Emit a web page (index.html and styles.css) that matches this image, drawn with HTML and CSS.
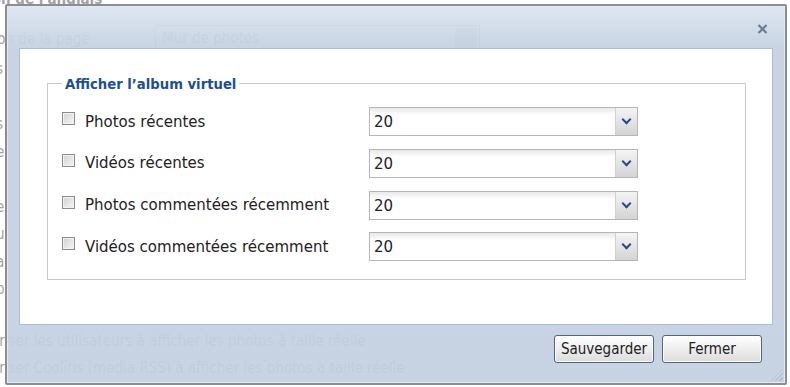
FILE: index.html
```html
<!DOCTYPE html>
<html lang="fr">
<head>
    <meta charset="UTF-8">
    <meta name="viewport" content="width=device-width, initial-scale=1.0">
    <title>Album virtuel</title>
    <link rel="stylesheet" href="styles.css">
</head>
<body>
    <div class="page">
        <p class="page-line page-head">Traduction de l'anglais</p>
        <div class="page-row">
            <span class="page-label">Orientation de la page</span>
            <span class="page-select">Mur de photos<span class="page-arrow"></span></span>
        </div>
        <div class="page-side">
            <p class="page-line">s</p>
            <p class="page-line">l</p>
            <p class="page-line">s</p>
            <p class="page-line">e</p>
            <p class="page-line">i</p>
            <p class="page-line">e</p>
            <p class="page-line">u</p>
            <p class="page-line">a</p>
            <p class="page-line">p</p>
        </div>
        <p class="page-line page-option">Autoriser les utilisateurs à afficher les photos à taille réelle</p>
        <p class="page-line page-option">Autoriser Cooliris (media RSS) à afficher les photos à taille réelle</p>
    </div>

    <div class="dialog">
        <div class="dialog-title">
            <span class="dialog-close">
                <svg width="11" height="10" viewBox="0 0 11 10">
                    <path d="M1.5 1 L9.5 9 M9.5 1 L1.5 9" stroke="#6b7b92" stroke-width="2.2" fill="none"/>
                </svg>
            </span>
        </div>

        <div class="dialog-body">
            <fieldset class="album">
                <legend class="album-legend">Afficher l’album virtuel</legend>

                <div class="album-row">
                    <label class="album-check"><span class="checkbox"></span>Photos récentes</label>
                    <div class="select"><span class="select-value">20</span><span class="select-arrow"></span></div>
                </div>
                <div class="album-row">
                    <label class="album-check"><span class="checkbox"></span>Vidéos récentes</label>
                    <div class="select"><span class="select-value">20</span><span class="select-arrow"></span></div>
                </div>
                <div class="album-row">
                    <label class="album-check"><span class="checkbox"></span>Photos commentées récemment</label>
                    <div class="select"><span class="select-value">20</span><span class="select-arrow"></span></div>
                </div>
                <div class="album-row">
                    <label class="album-check"><span class="checkbox"></span>Vidéos commentées récemment</label>
                    <div class="select"><span class="select-value">20</span><span class="select-arrow"></span></div>
                </div>
            </fieldset>
        </div>

        <div class="dialog-buttons">
            <button class="dialog-button">Sauvegarder</button>
            <button class="dialog-button">Fermer</button>
        </div>
        <span class="dialog-grip"></span>
    </div>
</body>
</html>
```

FILE: styles.css
```css
* {
  box-sizing: border-box;
}
body {
  margin: 0;
  background-color: white;
  font-family: "DejaVu Sans", sans-serif;
  color: #222;
  overflow: hidden;
}

/* page behind the dialog */
.page {
  height: 387px;
  color: #a3a3a3;
  font-size: 15px;
  font-family: "DejaVu Sans Condensed", "DejaVu Sans", sans-serif;
  font-stretch: condensed;
}
.page-line {
  margin: 0;
  white-space: nowrap;
}
.page-head {
  margin-top: -13px;
  height: 38px;
  line-height: 25px;
  padding-left: 20px;
  text-indent: -90px;
  font-weight: bold;
}
.page-row {
  display: flex;
  align-items: center;
  height: 27px;
}
.page-label {
  width: 155px;
  text-indent: -62px;
  overflow: hidden;
  white-space: nowrap;
}
.page-select {
  position: relative;
  width: 325px;
  height: 27px;
  line-height: 25px;
  padding-left: 6px;
  border: 1px solid #b5b5b5;
}
.page-arrow {
  position: absolute;
  right: 2px;
  top: 2px;
  width: 22px;
  height: 21px;
  background-color: #d5d5d5;
}
.page-side {
  height: 276px;
  padding-top: 4px;
}
.page-side .page-line {
  line-height: 27.5px;
  text-indent: -4px;
}
.page-option {
  line-height: 27px;
  text-indent: -32px;
}

/* dialog */
.dialog {
  position: absolute;
  left: 5px;
  top: 4px;
  width: 782px;
  height: 381px;
  display: flex;
  flex-direction: column;
  border: 2px solid #8a8d91;
  border-radius: 2px;
  box-shadow: inset 0 0 0 1px #e3e9f1;
  background: linear-gradient(rgba(220, 229, 240, 0.93), rgba(196, 209, 225, 0.92) 40px, rgba(195, 208, 224, 0.92));
}
.dialog-title {
  height: 42px;
  display: flex;
  justify-content: flex-end;
  align-items: flex-start;
}
.dialog-close {
  margin: 18px 17px 0 0;
  display: flex;
}
.dialog-body {
  margin: 0 12px;
  height: 277px;
  background-color: white;
  border: 1px solid #a8bfdb;
  padding: 26px 26px 0 27px;
}

.album {
  margin: 0;
  padding: 15px 0 18px 14px;
  border: 1px solid #c9c9c9;
  display: flex;
  flex-direction: column;
  gap: 12.8px;
}
.album-legend {
  padding: 0 3px;
  color: #1d4f93;
  font-weight: bold;
  font-size: 14.7px;
  font-family: "DejaVu Sans Condensed", "DejaVu Sans", sans-serif;
  font-stretch: condensed;
}
.album-row {
  display: flex;
  align-items: center;
  height: 29px;
}
.album-check {
  width: 307px;
  display: flex;
  align-items: center;
  font-size: 15px;
  color: #222;
}
.checkbox {
  width: 13px;
  height: 13px;
  margin: -6px 10px 0 0;
  border: 1px solid #8c8c8c;
  background: linear-gradient(135deg, #d2d2d2, #f6f6f6);
  box-shadow: inset 0 0 0 1px #f2f2f2;
}

.select {
  width: 269px;
  height: 29px;
  display: flex;
  border: 1px solid #b3b6ba;
  background: linear-gradient(#e8e8e8, white 7px);
}
.select-value {
  flex: 1;
  padding: 5px 0 0 4px;
  font-size: 15px;
}
.select-arrow {
  width: 22px;
  border-left: 1px solid #d0d0d0;
  background: linear-gradient(#f4f4f4, #d4d4d4);
  position: relative;
}
.select-arrow::after {
  content: "";
  position: absolute;
  left: 7px;
  top: 8px;
  width: 5px;
  height: 5px;
  border-right: 2px solid #284c82;
  border-bottom: 2px solid #284c82;
  transform: rotate(45deg);
}

.dialog-buttons {
  display: flex;
  justify-content: flex-end;
  gap: 8px;
  padding: 10px 23px 0 0;
}
.dialog-button {
  width: 100px;
  height: 28px;
  padding: 0;
  border: 1px solid #4b6584;
  border-radius: 3px;
  background: linear-gradient(white, #f0f0f0 45%, #dcdcdc);
  box-shadow: inset 0 0 0 1px #fff;
  font-family: "DejaVu Sans Condensed", "DejaVu Sans", sans-serif;
  font-stretch: condensed;
  font-size: 15px;
  color: #222;
}
.dialog-grip {
  position: absolute;
  right: 2px;
  bottom: 2px;
  width: 12px;
  height: 12px;
  background: repeating-linear-gradient(135deg, transparent 0 2px, #a9b6c6 2px 3px);
  clip-path: polygon(100% 0, 100% 100%, 0 100%);
}
```
